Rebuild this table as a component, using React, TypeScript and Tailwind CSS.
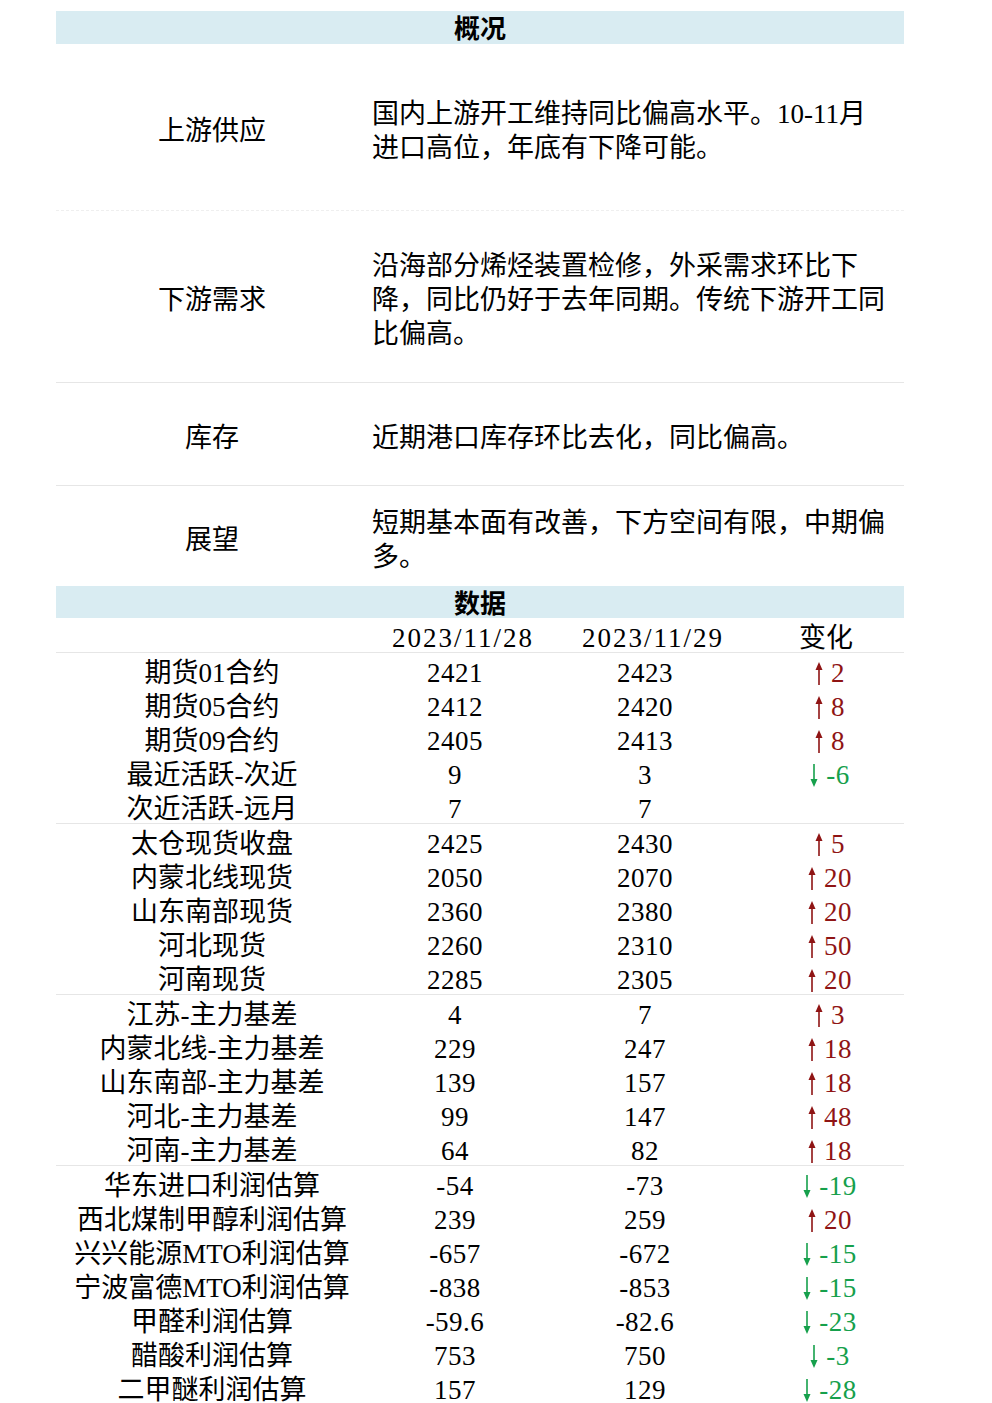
import React from 'react';

const font = "font-['Liberation_Serif','Noto_Sans_CJK_SC',serif]";

const overview = [
  { label: '上游供应', text: '国内上游开工维持同比偏高水平。10-11月进口高位，年底有下降可能。', h: 'h-[167px]', line: 'border-b border-dashed border-[#efefef]' },
  { label: '下游需求', text: '沿海部分烯烃装置检修，外采需求环比下降，同比仍好于去年同期。传统下游开工同比偏高。', h: 'h-[172px]', line: 'border-b border-[#e6e6e6]' },
  { label: '库存', text: '近期港口库存环比去化，同比偏高。', h: 'h-[103px]', line: 'border-b border-[#e6e6e6]' },
  { label: '展望', text: '短期基本面有改善，下方空间有限，中期偏多。', h: 'h-[100px]', line: '' },
];

type Row = [string, string, string, number | null];

const groups: Row[][] = [
  [
    ['期货01合约', '2421', '2423', 2],
    ['期货05合约', '2412', '2420', 8],
    ['期货09合约', '2405', '2413', 8],
    ['最近活跃-次近', '9', '3', -6],
    ['次近活跃-远月', '7', '7', null],
  ],
  [
    ['太仓现货收盘', '2425', '2430', 5],
    ['内蒙北线现货', '2050', '2070', 20],
    ['山东南部现货', '2360', '2380', 20],
    ['河北现货', '2260', '2310', 50],
    ['河南现货', '2285', '2305', 20],
  ],
  [
    ['江苏-主力基差', '4', '7', 3],
    ['内蒙北线-主力基差', '229', '247', 18],
    ['山东南部-主力基差', '139', '157', 18],
    ['河北-主力基差', '99', '147', 48],
    ['河南-主力基差', '64', '82', 18],
  ],
  [
    ['华东进口利润估算', '-54', '-73', -19],
    ['西北煤制甲醇利润估算', '239', '259', 20],
    ['兴兴能源MTO利润估算', '-657', '-672', -15],
    ['宁波富德MTO利润估算', '-838', '-853', -15],
    ['甲醛利润估算', '-59.6', '-82.6', -23],
    ['醋酸利润估算', '753', '750', -3],
    ['二甲醚利润估算', '157', '129', -28],
  ],
];

function Arrow({ up }: { up: boolean }) {
  const color = up ? '#8f1414' : '#16a04c';
  return (
    <svg width="8" height="23" viewBox="0 0 8 23" className="shrink-0">
      {up ? (
        <>
          <line x1="4" y1="6" x2="4" y2="23" stroke={color} strokeWidth="1.6" />
          <polygon points="4,0 7.5,8 0.5,8" fill={color} />
        </>
      ) : (
        <>
          <line x1="4" y1="0" x2="4" y2="17" stroke={color} strokeWidth="1.6" />
          <polygon points="4,23 7.5,15 0.5,15" fill={color} />
        </>
      )}
    </svg>
  );
}

function Change({ v }: { v: number | null }) {
  if (v === null) return <div />;
  const up = v > 0;
  return (
    <div className={`flex h-[34px] items-center justify-center gap-[8px] pl-[8px] ${up ? 'text-[#8f1414]' : 'text-[#16a04c]'}`}>
      <Arrow up={up} />
      <span className="tracking-[0.5px]">{v}</span>
    </div>
  );
}

export default function App() {
  return (
    <div className={`min-h-[1403px] bg-white pt-[11px] text-black ${font}`}>
      <div className="mx-[56px] w-[848px]">
        <div className="flex h-[33px] items-center justify-center bg-[#d9ecf2] pt-[4px] text-[26px] font-bold">
          概况
        </div>

        {overview.map((r) => (
          <div key={r.label} className={`grid grid-cols-[312px_1fr] items-center pt-[7px] ${r.h} ${r.line}`}>
            <div className="text-center text-[27px] leading-[34px]">{r.label}</div>
            <div className="w-[520px] pl-[4px] text-[27px] leading-[34px]">{r.text}</div>
          </div>
        ))}

        <div className="flex h-[32px] items-center justify-center bg-[#d9ecf2] pt-[4px] text-[26px] font-bold">
          数据
        </div>

        <div className="grid h-[35px] grid-cols-[312px_190px_190px_156px] items-start border-b border-[#e6e6e6] pt-[3px] text-[27px] leading-[34px]">
          <div />
          <div className="text-center tracking-[2px]">2023/11/28</div>
          <div className="text-center tracking-[2px]">2023/11/29</div>
          <div className="text-center">变化</div>
        </div>

        {groups.map((g, gi) => (
          <div key={gi} className="border-b border-[#e6e6e6]">
            {g.map(([label, a, b, c]) => (
              <div key={label} className="grid h-[34px] grid-cols-[312px_190px_190px_156px] items-start pt-[3px] text-[27px] leading-[34px]">
                <div className="text-center">{label}</div>
                <div className="pr-[16px] text-center tracking-[0.5px]">{a}</div>
                <div className="pr-[16px] text-center tracking-[0.5px]">{b}</div>
                <Change v={c} />
              </div>
            ))}
          </div>
        ))}
      </div>
    </div>
  );
}
